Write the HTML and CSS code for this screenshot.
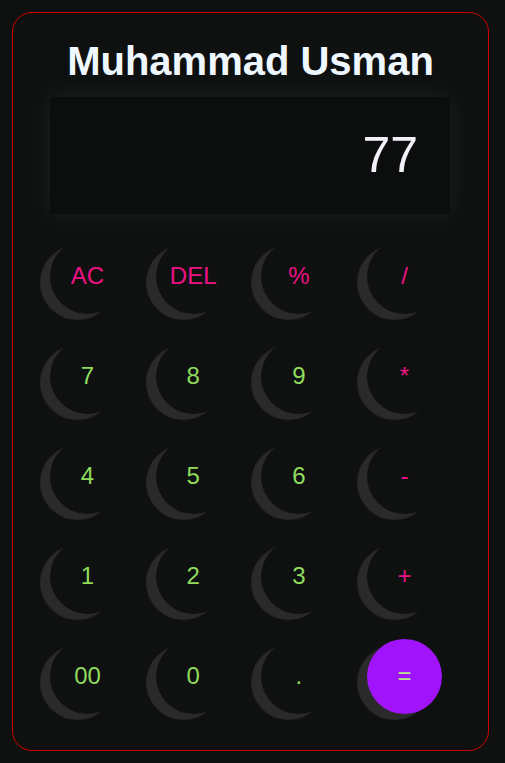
FILE: index.html
```html
<!DOCTYPE html>
<html>
<head>
<meta charset="utf-8">
<link rel="stylesheet" href="styles.css">
</head>
<body>
<div class="calc">
  <h1 class="title">Muhammad Usman</h1>
  <div class="display"><span class="value">77</span></div>
  <div class="keys">
    <button class="key op">AC</button>
    <button class="key op">DEL</button>
    <button class="key op">%</button>
    <button class="key op">/</button>
    <button class="key num">7</button>
    <button class="key num">8</button>
    <button class="key num">9</button>
    <button class="key op">*</button>
    <button class="key num">4</button>
    <button class="key num">5</button>
    <button class="key num">6</button>
    <button class="key op">-</button>
    <button class="key num">1</button>
    <button class="key num">2</button>
    <button class="key num">3</button>
    <button class="key op">+</button>
    <button class="key num">00</button>
    <button class="key num">0</button>
    <button class="key num">.</button>
    <button class="key num equal">=</button>
  </div>
</div>
</body>
</html>
```

FILE: styles.css
```css
html, body {
  margin: 0;
  padding: 0;
  background: #0f1111;
}
body {
  padding: 12px 16px 12px 12px;
  font-family: "Liberation Sans", Arial, sans-serif;
}
.calc {
  width: 475px;
  height: 737px;
  border: 1px solid #d10000;
  border-radius: 20px;
  background: #0f1111;
  box-sizing: content-box;
  display: flex;
  flex-direction: column;
  align-items: center;
}
.title {
  margin: 25px 0 13px;
  font-size: 40px;
  font-weight: bold;
  line-height: 46px;
  color: #f0f8ff;
}
.display {
  width: 400px;
  height: 117px;
  margin-right: 1px;
  background: #0c0d0d;
  box-shadow: 0 0 22px #1f2020;
  display: flex;
  align-items: center;
  justify-content: flex-end;
  box-sizing: border-box;
  padding: 0 32px 2px 0;
}
.value {
  font-size: 50px;
  color: #f1f1f9;
}
.keys {
  margin-top: 25px;
  margin-right: 1px;
  width: 400px;
  display: grid;
  grid-template-columns: repeat(4, 75px);
  column-gap: 30.67px;
  row-gap: 25px;
}
.key {
  width: 75px;
  height: 75px;
  border: none;
  border-radius: 50%;
  background: #0f1111;
  box-shadow: -10px 6px 1px #2a2a2a;
  font-family: "Liberation Sans", Arial, sans-serif;
  font-size: 24px;
  padding: 0 0 2px;
  display: flex;
  align-items: center;
  justify-content: center;
  line-height: 1;
}
.op {
  color: #ec1283;
}
.num {
  color: #8fdc5c;
}
.equal {
  background: #a114fb;
  color: #b8e48a;
}
```
